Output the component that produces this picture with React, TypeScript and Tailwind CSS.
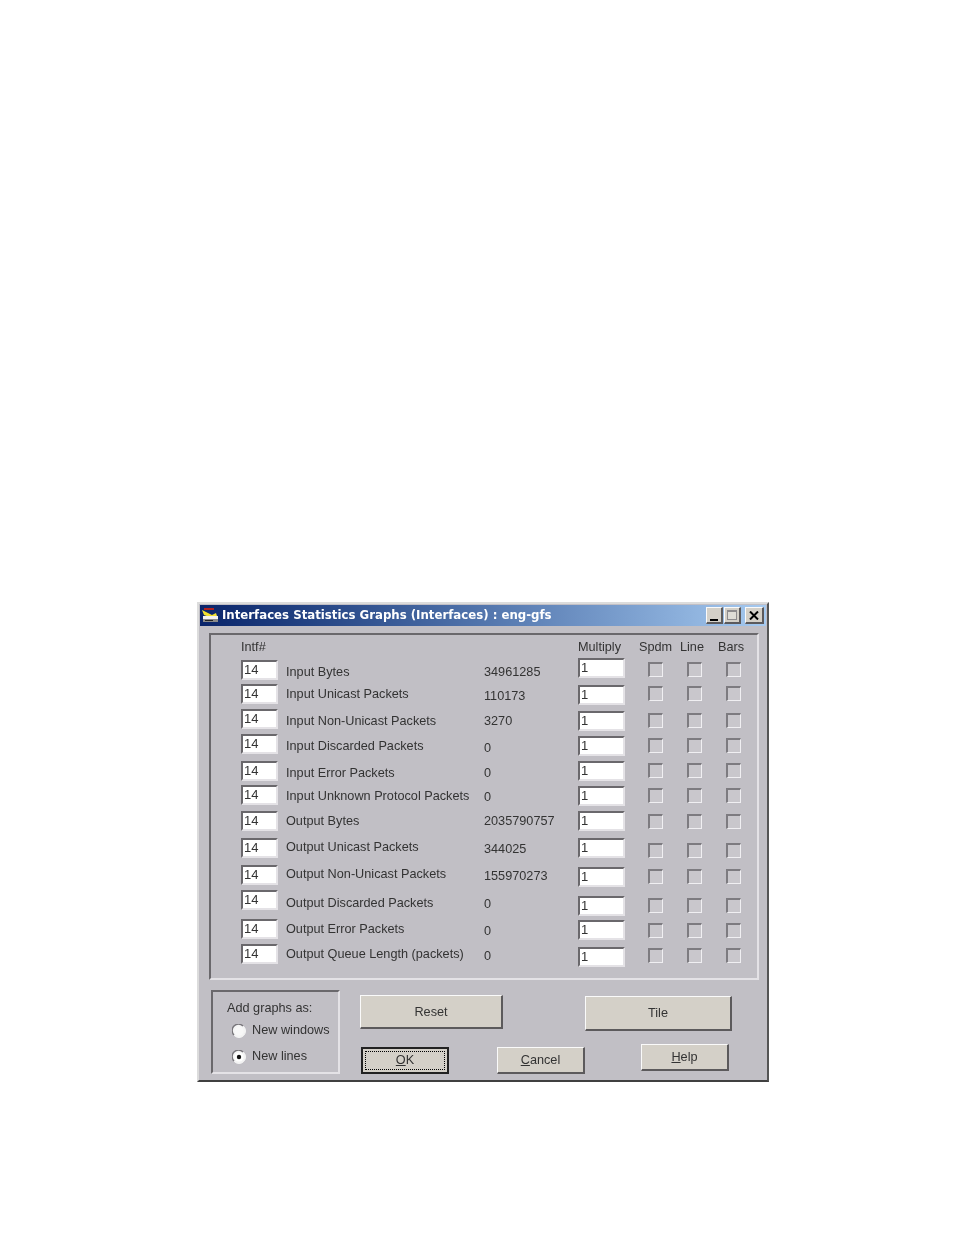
const FONT = "font-['Liberation_Sans',Arial,sans-serif]"

const labels = [
  ['Input Bytes', '34961285'],
  ['Input Unicast Packets', '110173'],
  ['Input Non-Unicast Packets', '3270'],
  ['Input Discarded Packets', '0'],
  ['Input Error Packets', '0'],
  ['Input Unknown Protocol Packets', '0'],
  ['Output Bytes', '2035790757'],
  ['Output Unicast Packets', '344025'],
  ['Output Non-Unicast Packets', '155970273'],
  ['Output Discarded Packets', '0'],
  ['Output Error Packets', '0'],
  ['Output Queue Length (packets)', '0'],
]

// the controls in the dialog don't line up, so each column has its own row centres
const intfY = [670, 694, 719, 744, 771, 795, 821, 848, 875, 900, 929, 954]
const labelY = [671, 693, 720, 745, 772, 795, 820, 846, 873, 902, 928, 953]
const valueY = [671, 695, 720, 747, 772, 796, 820, 848, 875, 903, 930, 955]
const multY = [668, 695, 721, 746, 771, 796, 821, 848, 877, 906, 930, 957]
const checkY = [670, 694, 721, 746, 771, 796, 822, 851, 877, 906, 931, 956]

// margin above item i, given centres, item height and the y the column starts from
function gap(ys: number[], i: number, h: number, start: number) {
  const top = ys[i] - h / 2
  return i === 0 ? top - start : top - (ys[i - 1] + h / 2)
}

const sunken = 'border-t-2 border-l-2 border-t-[#6a686c] border-l-[#6a686c] border-b-2 border-r-2 border-b-[#e4e2e6] border-r-[#e4e2e6]'
const raised = 'border-t border-l border-t-[#fafafa] border-l-[#fafafa] border-b-2 border-r-2 border-b-[#5c5a5c] border-r-[#5c5a5c] bg-[#d4d0c8]'

function TextBox({ value, w, mt }: { value: string; w: string; mt: number }) {
  return (
    <div
      className={`${w} h-[20px] bg-white ${sunken} pl-[1px] text-[13px] leading-[15px] text-[#333]`}
      style={{ marginTop: mt }}
    >
      {value}
    </div>
  )
}

function CheckColumn({ x }: { x: string }) {
  return (
    <div className={`flex flex-col ${x} w-[16px]`}>
      {checkY.map((y, i) => (
        <div
          key={i}
          className="h-[15px] w-[15px] border-t-2 border-l-2 border-b border-r border-t-[#7d7b80] border-l-[#7d7b80] border-b-[#f0eff2] border-r-[#f0eff2] bg-[#c9c7cc]"
          style={{ marginTop: gap(checkY, i, 15, 656) }}
        />
      ))}
    </div>
  )
}

function Btn({ w, h, mt, ml, children }: { w: string; h: string; mt?: string; ml?: string; children: React.ReactNode }) {
  return (
    <div className={`${w} ${h} ${mt ?? ''} ${ml ?? ''} ${raised} flex items-center justify-center pt-[1px] text-[12.7px] text-[#333]`}>
      {children}
    </div>
  )
}

function Radio({ checked }: { checked?: boolean }) {
  return (
    <svg width="14" height="14" viewBox="0 0 14 14" className="shrink-0">
      <circle cx="7" cy="7" r="6.5" fill="#f4f4f4" stroke="#f4f4f4" />
      <path d="M2 11 A6.3 6.3 0 0 1 11 2" fill="none" stroke="#77757a" strokeWidth="1.4" />
      <circle cx="7" cy="7" r="4.6" fill={checked ? '#ffffff' : '#f8f8f8'} />
      {checked && <circle cx="7" cy="7" r="2.2" fill="#111" />}
    </svg>
  )
}

export default function App() {
  return (
    <div className={`h-[1235px] w-[954px] bg-white pt-[602px] pl-[197px] ${FONT}`}>
      {/* Dialog */}
      <div className="h-[480px] w-[572px] bg-[#c1bfc5] border-t-2 border-l-2 border-t-[#dcdcdc] border-l-[#dcdcdc] border-b-2 border-r-2 border-b-[#404040] border-r-[#555] pt-[1px] px-[1px] blur-[0.3px]">
        {/* Title bar */}
        <div className="h-[21px] flex items-center bg-gradient-to-r from-[#0a246a] to-[#a6caf0] pl-[1px] pr-[2px]">
          <svg width="18" height="17" viewBox="0 0 18 17" className="shrink-0">
            <rect x="3" y="1" width="10" height="2" fill="#b02020" />
            <path d="M1 3 L11 8 L15 6 L16 9 L11 11 L3 8 Z" fill="#f0e030" />
            <rect x="2" y="9" width="15" height="3" fill="#f2f2f2" />
            <rect x="2" y="12" width="15" height="3" fill="#8a8a8a" />
            <rect x="4" y="13" width="8" height="1" fill="#222" />
          </svg>
          <span className="ml-[3px] font-['DejaVu_Sans',sans-serif] text-[11.75px] font-bold leading-none text-white">
            Interfaces Statistics Graphs (Interfaces) : eng-gfs
          </span>
          <div className="ml-auto flex items-center">
            <div className={`h-[17px] w-[17px] ${raised} flex items-end justify-center pb-[1px]`}>
              <div className="h-[2px] w-[8px] bg-black" />
            </div>
            <div className={`ml-[1px] h-[17px] w-[17px] ${raised} flex items-center justify-center`}>
              <div className="h-[10px] w-[10px] border border-[#8d8b8d] border-t-2 bg-[#dedcd6]" />
            </div>
            <div className={`ml-[4px] h-[17px] w-[19px] ${raised} flex items-center justify-center`}>
              <svg width="10" height="9" viewBox="0 0 10 9">
                <path d="M1 0.5 L9 8.5 M9 0.5 L1 8.5" stroke="#000" strokeWidth="2" />
              </svg>
            </div>
          </div>
        </div>

        {/* Statistics group */}
        <div className={`ml-[9px] mt-[7px] h-[347px] w-[550px] ${sunken} flex text-[12.7px] leading-[15px] text-[#333]`}>
          {/* page y of the header bottom is 655, every column counts from there */}
          <div className="ml-[30px] flex w-[37px] flex-col">
            <div className="mt-[5px] h-[15px]">Intf#</div>
            {intfY.map((y, i) => (
              <TextBox key={i} value="14" w="w-[37px]" mt={gap(intfY, i, 20, 655)} />
            ))}
          </div>
          <div className="ml-[8px] flex w-[198px] flex-col pt-[20px]">
            {labels.map(([name], i) => (
              <div key={name} className="h-[15px] whitespace-nowrap" style={{ marginTop: gap(labelY, i, 15, 654) }}>
                {name}
              </div>
            ))}
          </div>
          <div className="flex w-[94px] flex-col pt-[20px]">
            {labels.map(([name, val], i) => (
              <div key={name} className="h-[15px] whitespace-nowrap" style={{ marginTop: gap(valueY, i, 15, 654) }}>
                {val}
              </div>
            ))}
          </div>
          <div className="flex w-[47px] flex-col">
            <div className="mt-[5px] h-[15px] whitespace-nowrap">Multiply</div>
            {multY.map((y, i) => (
              <TextBox key={i} value="1" w="w-[47px]" mt={gap(multY, i, 20, 655)} />
            ))}
          </div>
          <div className="flex flex-col">
            <div className="ml-[14px] mt-[5px] flex h-[15px]">
              <span className="w-[41px]">Spdm</span>
              <span className="w-[38px]">Line</span>
              <span>Bars</span>
            </div>
            <div className="flex">
              <CheckColumn x="ml-[23px]" />
              <CheckColumn x="ml-[23px]" />
              <CheckColumn x="ml-[23px]" />
            </div>
          </div>
        </div>

        {/* Bottom controls */}
        <div className="mt-[10px] ml-[11px] flex text-[12.7px] leading-[15px] text-[#333]">
          <div className={`h-[84px] w-[129px] ${sunken} pl-[14px] pt-[9px]`}>
            <div>Add graphs as:</div>
            <div className="mt-[7px] ml-[5px] flex items-center gap-[6px]">
              <Radio />
              <span>New windows</span>
            </div>
            <div className="mt-[11px] ml-[5px] flex items-center gap-[6px]">
              <Radio checked />
              <span>New lines</span>
            </div>
          </div>
          <div className="ml-[20px] flex w-[143px] flex-col">
            <Btn w="w-[143px]" h="h-[34px]" mt="mt-[5px]">Reset</Btn>
            <div className="ml-[1px] mt-[18px] flex h-[27px] w-[88px] items-center justify-center border-2 border-[#222] bg-[#d4d0c8] p-[2px]">
              <div className="flex h-full w-full items-center justify-center border border-dotted border-black">
                <span className="underline underline-offset-1">O</span>K
              </div>
            </div>
          </div>
          <Btn w="w-[88px]" h="h-[27px]" mt="mt-[57px]" ml="-ml-[6px]">
            <span className="underline underline-offset-1">C</span>ancel
          </Btn>
          <div className="flex flex-col">
            <Btn w="w-[147px]" h="h-[35px]" mt="mt-[6px]">Tile</Btn>
            <Btn w="w-[88px]" h="h-[27px]" mt="mt-[13px]" ml="ml-[56px]">
              <span className="underline underline-offset-1">H</span>elp
            </Btn>
          </div>
        </div>
      </div>
    </div>
  )
}
